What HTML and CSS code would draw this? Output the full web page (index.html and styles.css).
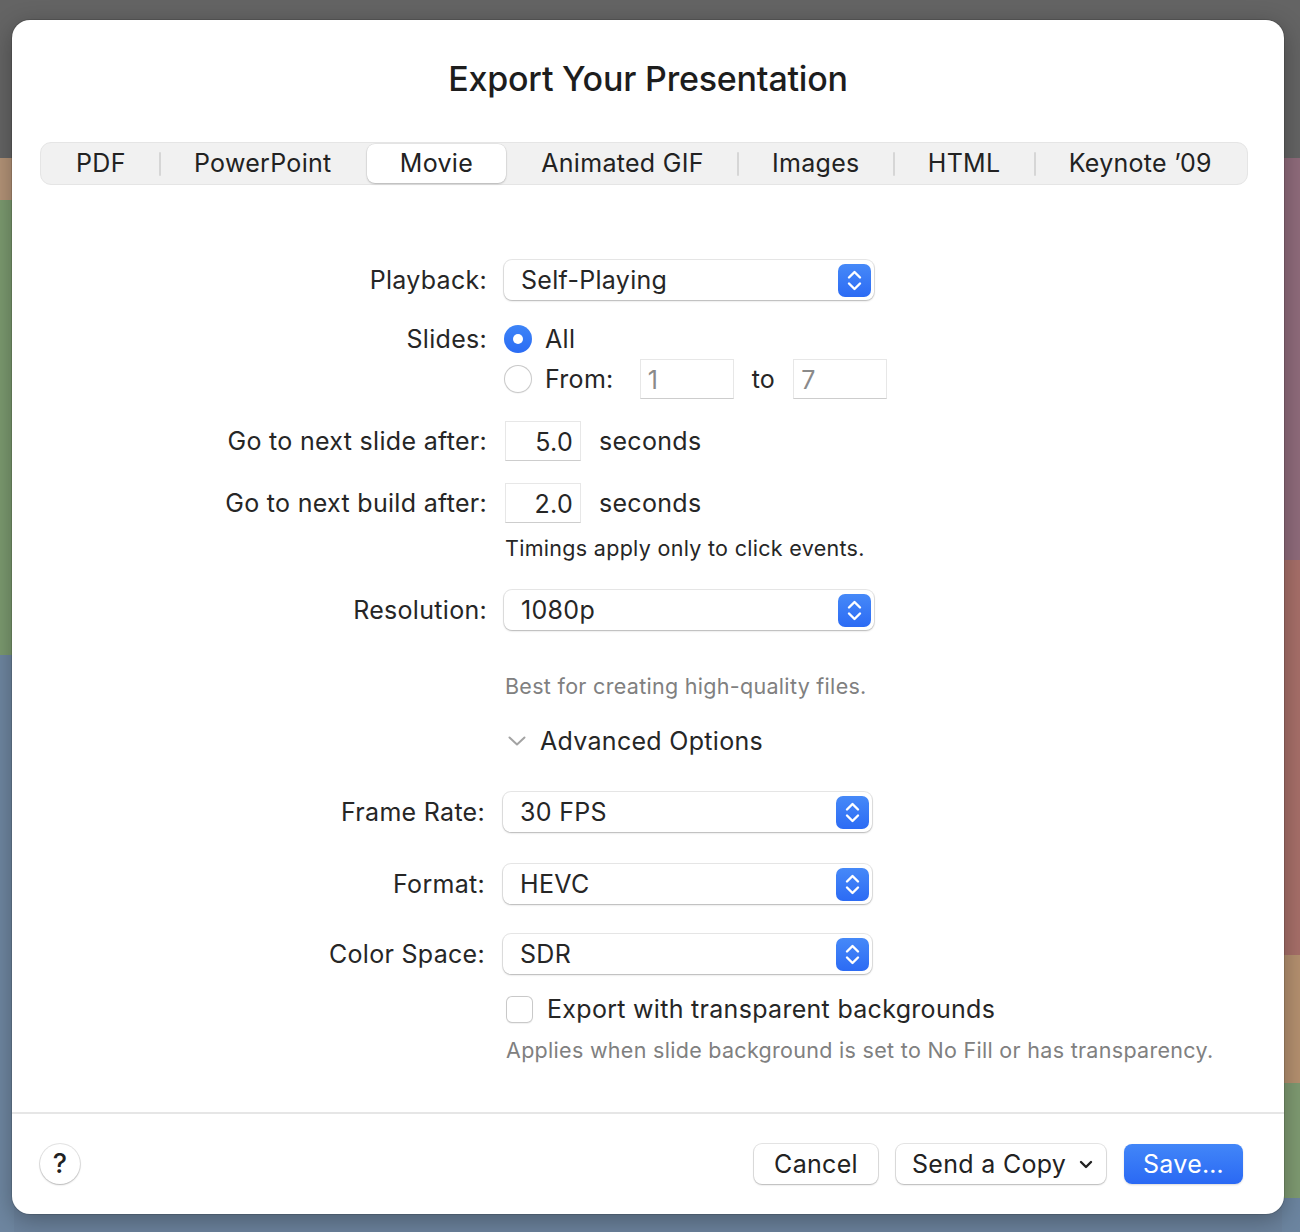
FILE: index.html
```html
<!DOCTYPE html>
<html lang="en">
<head>
<meta charset="utf-8">
<title>Export Your Presentation</title>
<link rel="stylesheet" href="styles.css">
</head>
<body>
<div class="dialog">
  <h1 class="title">Export Your Presentation</h1>

  <div class="segments">
    <div class="seg">PDF</div>
    <div class="sep"></div>
    <div class="seg">PowerPoint</div>
    <div class="sep hidden"></div>
    <div class="seg selected">Movie</div>
    <div class="sep hidden"></div>
    <div class="seg">Animated GIF</div>
    <div class="sep"></div>
    <div class="seg">Images</div>
    <div class="sep"></div>
    <div class="seg">HTML</div>
    <div class="sep"></div>
    <div class="seg">Keynote ’09</div>
  </div>

  <div class="form">
    <div class="row r-playback">
      <div class="label">Playback:</div>
      <div class="ctl">
        <div class="popup"><span class="popup-text">Self-Playing</span><span class="stepper"><svg viewBox="0 0 33 33" width="33" height="33"><path d="M11 13.5 L16.5 8 L22 13.5 M11 19.5 L16.5 25 L22 19.5" fill="none" stroke="#fff" stroke-width="2.4" stroke-linecap="round" stroke-linejoin="round"/></svg></span></div>
      </div>
    </div>

    <div class="row r-all">
      <div class="label">Slides:</div>
      <div class="ctl">
        <span class="radio on"></span><span class="opt">All</span>
      </div>
    </div>

    <div class="row r-from">
      <div class="label"></div>
      <div class="ctl">
        <span class="radio"></span><span class="opt from-label">From:</span>
        <span class="field range disabled">1</span>
        <span class="to">to</span>
        <span class="field range disabled">7</span>
      </div>
    </div>

    <div class="row r-gap">
      <div class="label">Go to next slide after:</div>
      <div class="ctl">
        <span class="field num">5.0</span><span class="unit">seconds</span>
      </div>
    </div>

    <div class="row r-gap">
      <div class="label">Go to next build after:</div>
      <div class="ctl">
        <span class="field num">2.0</span><span class="unit">seconds</span>
      </div>
    </div>

    <div class="row r-timings">
      <div class="label"></div>
      <div class="ctl"><span class="note">Timings apply only to click events.</span></div>
    </div>

    <div class="row r-gap">
      <div class="label">Resolution:</div>
      <div class="ctl">
        <div class="popup"><span class="popup-text">1080p</span><span class="stepper"><svg viewBox="0 0 33 33" width="33" height="33"><path d="M11 13.5 L16.5 8 L22 13.5 M11 19.5 L16.5 25 L22 19.5" fill="none" stroke="#fff" stroke-width="2.4" stroke-linecap="round" stroke-linejoin="round"/></svg></span></div>
      </div>
    </div>

    <div class="row r-best">
      <div class="label"></div>
      <div class="ctl"><span class="note gray">Best for creating high-quality files.</span></div>
    </div>

    <div class="row r-adv">
      <div class="label"></div>
      <div class="ctl">
        <svg class="disclosure" viewBox="0 0 18 10" width="18" height="10"><path d="M1.5 1.5 L9 8.5 L16.5 1.5" fill="none" stroke="#a3a3a3" stroke-width="2" stroke-linecap="round" stroke-linejoin="round"/></svg>
        <span class="adv-text">Advanced Options</span>
      </div>
    </div>

    <div class="row lower r-frame">
      <div class="label">Frame Rate:</div>
      <div class="ctl">
        <div class="popup"><span class="popup-text">30 FPS</span><span class="stepper"><svg viewBox="0 0 33 33" width="33" height="33"><path d="M11 13.5 L16.5 8 L22 13.5 M11 19.5 L16.5 25 L22 19.5" fill="none" stroke="#fff" stroke-width="2.4" stroke-linecap="round" stroke-linejoin="round"/></svg></span></div>
      </div>
    </div>

    <div class="row lower r-format">
      <div class="label">Format:</div>
      <div class="ctl">
        <div class="popup"><span class="popup-text">HEVC</span><span class="stepper"><svg viewBox="0 0 33 33" width="33" height="33"><path d="M11 13.5 L16.5 8 L22 13.5 M11 19.5 L16.5 25 L22 19.5" fill="none" stroke="#fff" stroke-width="2.4" stroke-linecap="round" stroke-linejoin="round"/></svg></span></div>
      </div>
    </div>

    <div class="row lower r-color">
      <div class="label">Color Space:</div>
      <div class="ctl">
        <div class="popup"><span class="popup-text">SDR</span><span class="stepper"><svg viewBox="0 0 33 33" width="33" height="33"><path d="M11 13.5 L16.5 8 L22 13.5 M11 19.5 L16.5 25 L22 19.5" fill="none" stroke="#fff" stroke-width="2.4" stroke-linecap="round" stroke-linejoin="round"/></svg></span></div>
      </div>
    </div>

    <div class="row lower r-check">
      <div class="label"></div>
      <div class="ctl">
        <span class="checkbox"></span><span class="check-label">Export with transparent backgrounds</span>
      </div>
    </div>

    <div class="row lower r-applies">
      <div class="label"></div>
      <div class="ctl"><span class="note gray applies">Applies when slide background is set to No Fill or has transparency.</span></div>
    </div>
  </div>

  <div class="divider"></div>

  <div class="footer">
    <button class="help">?</button>
    <div class="actions">
      <button class="btn cancel">Cancel</button>
      <button class="btn send">Send a Copy <svg viewBox="0 0 14 9" width="14" height="9"><path d="M2 2 L7 7 L12 2" fill="none" stroke="#222" stroke-width="2.4" stroke-linecap="round" stroke-linejoin="round"/></svg></button>
      <button class="btn primary">Save…</button>
    </div>
  </div>
</div>
</body>
</html>
```

FILE: styles.css
```css
* { box-sizing: border-box; }

html, body { margin: 0; }

body {
  width: 1300px;
  height: 1232px;
  overflow: hidden;
  padding: 20px 0 0 12px;
  font-family: Inter, "Noto Sans", "Liberation Sans", sans-serif;
  letter-spacing: 0.3px;
  color: #262626;
  background:
    linear-gradient(#646464, #646464) 0 0 / 100% 158px no-repeat,
    linear-gradient(to bottom, #b39377 0 200px, #7b9a6f 200px 655px, #6e86a0 655px) 0 0 / 14px 100% no-repeat,
    linear-gradient(to bottom, #8f6b7b 0 560px, #a76f69 560px 955px, #b4906f 955px 1083px, #7e9a71 1083px 1198px, #6c85a0 1198px) 100% 0 / 18px 100% no-repeat,
    #6b829c;
}

.dialog {
  width: 1272px;
  height: 1194px;
  background: #fff;
  border-radius: 18px;
  box-shadow: 0 0 0 1px rgba(0, 0, 0, 0.12), 0 6px 24px rgba(0, 0, 0, 0.3);
  display: flex;
  flex-direction: column;
}

.title {
  margin: 39px 0 0;
  height: 40px;
  line-height: 40px;
  text-align: center;
  font-size: 34px;
  font-weight: 500;
  color: #1d1d1d;
  letter-spacing: -0.2px;
}

/* segmented control */
.segments {
  margin: 43px 36px 0 28px;
  height: 43px;
  display: flex;
  align-items: center;
  padding: 2px;
  background: #f1f1f1;
  border: 1px solid #e5e5e5;
  border-radius: 11px;
}

.seg {
  flex: 1 1 auto;
  height: 39px;
  line-height: 39px;
  text-align: center;
  font-size: 25px;
  color: #222;
  border-radius: 8px;
  white-space: nowrap;
}

.seg.selected {
  background: #fff;
  box-shadow: 0 1px 2px rgba(0, 0, 0, 0.22), 0 0 0 0.5px rgba(0, 0, 0, 0.08);
}

.sep {
  flex: 0 0 2px;
  height: 24px;
  background: #d6d6d6;
  border-radius: 1px;
}

.sep.hidden { visibility: hidden; }

/* form */
.form {
  margin-top: 75px;
  display: flex;
  flex-direction: column;
}

.row {
  display: flex;
  align-items: center;
  height: 40px;
  font-size: 25px;
}

.row .label {
  width: 475px;
  text-align: right;
  white-space: nowrap;
}

.row .ctl {
  margin-left: 17px;
  display: flex;
  align-items: center;
  height: 40px;
}

.row.lower .label { width: 473px; }
.row.lower .ctl { margin-left: 18px; }

.r-all { margin-top: 19px; }
.r-from { margin-top: 0; }
.r-gap { margin-top: 22px; }
.r-timings { margin-top: 5px; }
.r-best { margin-top: 36px; }
.r-adv { margin-top: 15px; }
.r-frame { margin-top: 31px; }
.r-format { margin-top: 32px; }
.r-color { margin-top: 30px; }
.r-check { margin-top: 15px; }
.r-applies { margin-top: 1px; }

.popup {
  width: 370px;
  height: 40px;
  background: #fff;
  border-radius: 8px;
  box-shadow: 0 0 0 1px rgba(0, 0, 0, 0.09), 0 1px 2px rgba(0, 0, 0, 0.22);
  display: flex;
  align-items: center;
  justify-content: space-between;
  padding: 0 3px 0 17px;
}

.row.lower .popup { width: 369px; }

.stepper {
  width: 33px;
  height: 33px;
  border-radius: 7px;
  background: linear-gradient(#4689f8, #2c6bf4);
  display: flex;
}

.radio {
  width: 28px;
  height: 28px;
  border-radius: 50%;
  background: #fff;
  box-shadow: inset 0 0 0 1px #c9c9c9, 0 0.5px 1px rgba(0, 0, 0, 0.08);
  display: inline-block;
  position: relative;
}

.radio.on {
  background: linear-gradient(#3d84f7, #2b6cf4);
  box-shadow: none;
}

.radio.on::after {
  content: "";
  position: absolute;
  left: 9px;
  top: 9px;
  width: 10px;
  height: 10px;
  border-radius: 50%;
  background: #fff;
}

.opt { margin-left: 13px; }
.from-label { margin-right: 26px; }

.field {
  height: 40px;
  line-height: 40px;
  background: #fff;
  border: 1px solid #e7e7e7;
  border-bottom-color: #cdcdcd;
  font-size: 25px;
  display: inline-block;
}

.field.range {
  width: 94px;
  padding-left: 7px;
}

.field.disabled { color: #8a8a8a; }

.to {
  margin: 0 18px 0 18px;
}

.field.num {
  width: 76px;
  text-align: right;
  padding-right: 7px;
  margin-left: 1px;
}

.unit { margin-left: 18px; }

.note {
  font-size: 21.5px;
  color: #262626;
  margin-left: 1px;
}

.note.gray { color: #808080; }
.note.applies { margin-left: 3px; }

.disclosure {
  margin-left: 4px;
  display: block;
}

.adv-text { margin-left: 14px; }

.checkbox {
  width: 27px;
  height: 27px;
  border-radius: 6px;
  background: #fff;
  box-shadow: inset 0 0 0 1px #c9c9c9, 0 0.5px 1px rgba(0, 0, 0, 0.06);
  margin-left: 3px;
  display: inline-block;
}

.check-label { margin-left: 14px; }

.divider {
  margin-top: auto;
  height: 2px;
  background: #e6e6e6;
}

.footer {
  height: 100px;
  display: flex;
  align-items: center;
  justify-content: space-between;
  padding: 0 41px 0 28px;
}

button {
  font-family: inherit;
  letter-spacing: inherit;
  cursor: default;
}

.help {
  width: 40px;
  height: 40px;
  border-radius: 50%;
  border: none;
  background: #fff;
  box-shadow: 0 0 0 1px rgba(0, 0, 0, 0.1), 0 1px 2px rgba(0, 0, 0, 0.2);
  font-size: 27px;
  font-weight: 500;
  color: #222;
  padding: 0;
  line-height: 40px;
}

.actions {
  display: flex;
  gap: 18px;
}

.btn {
  height: 40px;
  border: none;
  border-radius: 8px;
  background: #fff;
  box-shadow: 0 0 0 1px rgba(0, 0, 0, 0.1), 0 1px 2px rgba(0, 0, 0, 0.2);
  font-size: 25px;
  color: #222;
  padding: 0;
  display: flex;
  align-items: center;
  justify-content: center;
  white-space: nowrap;
}

.btn.cancel { width: 124px; }

.btn.send {
  width: 210px;
  justify-content: flex-start;
  padding-left: 16px;
}

.btn.send svg { margin-left: 13px; }

.btn.primary {
  width: 119px;
  background: linear-gradient(#4286f8, #2a69f4);
  color: #fff;
  box-shadow: 0 1px 2px rgba(0, 0, 0, 0.15);
}
```
